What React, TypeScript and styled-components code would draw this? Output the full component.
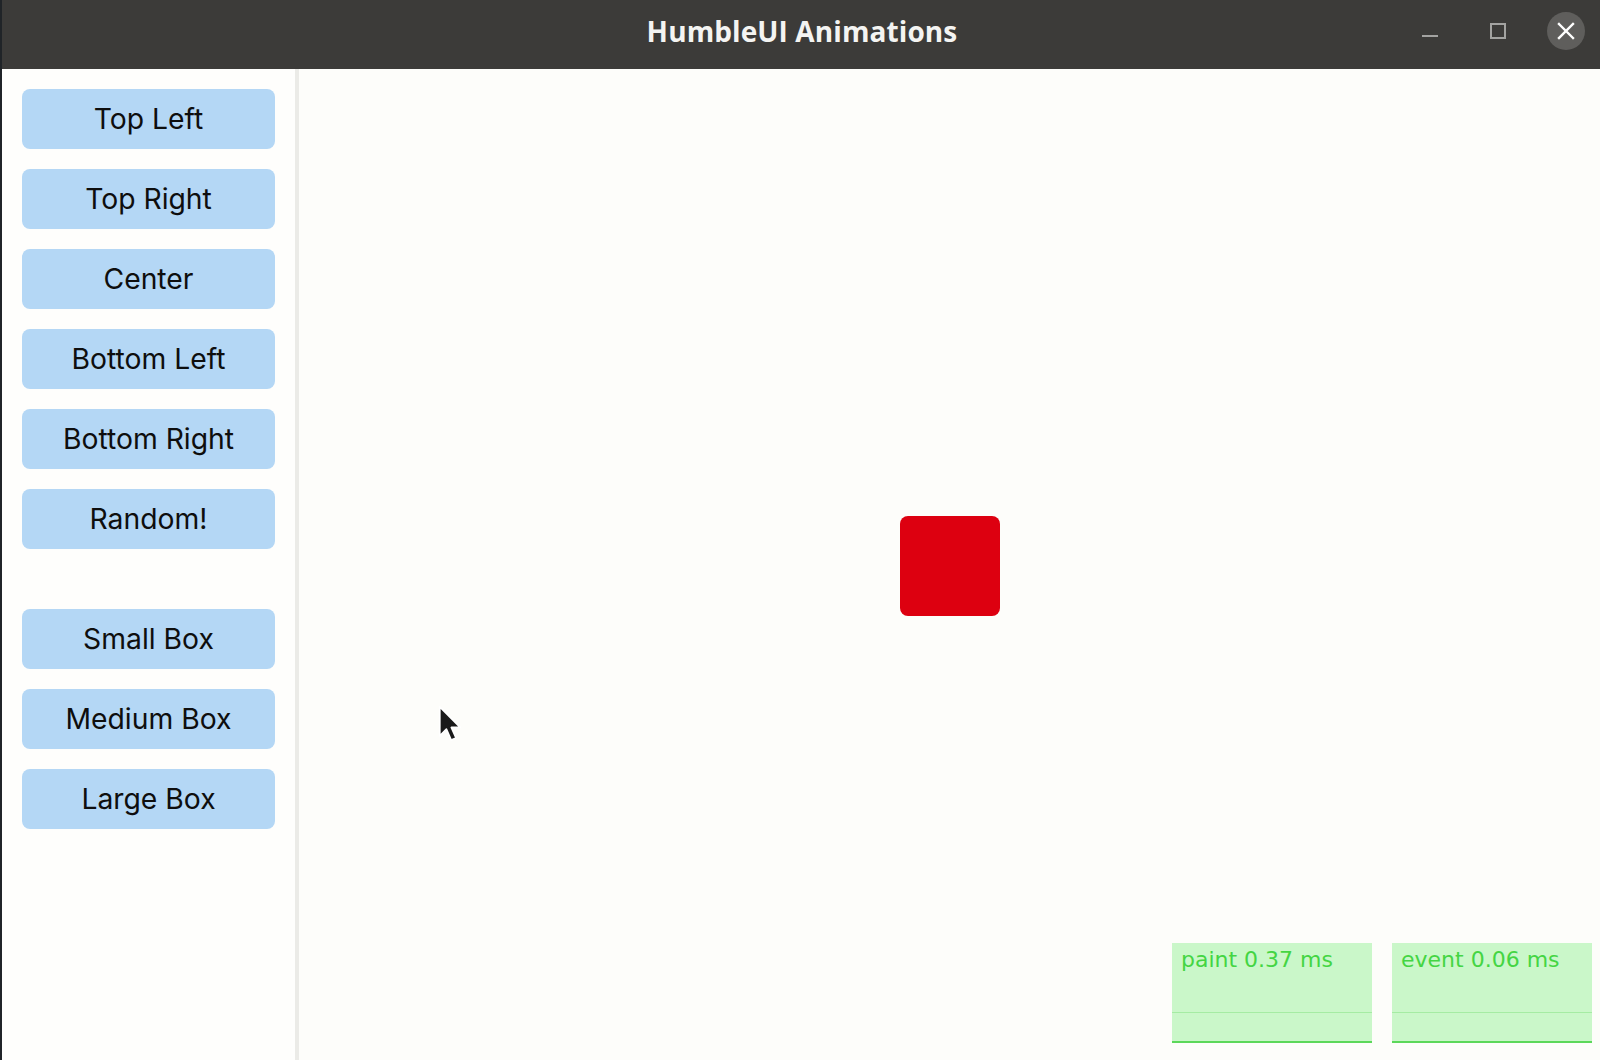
import React from "react";
import styled, { createGlobalStyle } from "styled-components";

const Global = createGlobalStyle`
  html, body { margin: 0; padding: 0; background: #fdfdfa; }
  body { width: 1600px; height: 1060px; overflow: hidden; }
  #root { width: 1600px; height: 1060px; }
`;

const Window = styled.div`
  width: 1600px;
  height: 1060px;
  display: flex;
  flex-direction: column;
  box-sizing: border-box;
  border-left: 2px solid #202428;
  position: relative;
  overflow: hidden;
`;

const TitleBar = styled.div`
  height: 69px;
  flex: none;
  background: #3c3b39;
  display: flex;
  align-items: center;
  justify-content: center;
  position: relative;
`;

const Title = styled.div`
  font-family: "Open Sans", "Noto Sans", sans-serif;
  font-weight: 700;
  font-size: 28px;
  color: #f4f4f2;
  letter-spacing: 0.1px;
  margin-left: 2px;
  margin-top: -7px;
`;

const Controls = styled.div`
  position: absolute;
  right: 15px;
  top: 12px;
  display: flex;
  align-items: center;
  gap: 30px;
`;

const CtrlBtn = styled.div<{ $round?: boolean }>`
  width: 38px;
  height: 38px;
  display: flex;
  align-items: center;
  justify-content: center;
  border-radius: 50%;
  background: ${(p) => (p.$round ? "#5f5e5c" : "transparent")};
`;

const Main = styled.div`
  flex: 1;
  display: flex;
  min-height: 0;
`;

const Sidebar = styled.div`
  width: 293px;
  flex: none;
  background: #fefefc;
  box-sizing: border-box;
  padding: 20px 20px;
  display: flex;
  flex-direction: column;
  gap: 20px;
`;

const Separator = styled.div`
  width: 4px;
  flex: none;
  background: #ebebe7;
`;

const Button = styled.div`
  height: 60px;
  border-radius: 8px;
  background: #b4d7f5;
  display: flex;
  align-items: center;
  justify-content: center;
  font-family: Inter, "Noto Sans", sans-serif;
  font-size: 28.3px;
  color: #0e0e0e;
  box-sizing: border-box;
`;

const Spacer = styled.div`
  height: 20px;
`;

const Canvas = styled.div`
  flex: 1;
  position: relative;
  background: #fdfdfa;
  display: flex;
  align-items: center;
  justify-content: center;
  padding-top: 3px;
`;

const Box = styled.div`
  width: 100px;
  height: 100px;
  border-radius: 8px;
  background: #dd0010;
`;

const Perf = styled.div`
  position: absolute;
  right: 8px;
  bottom: 17px;
  display: flex;
  gap: 20px;
`;

const PerfPanel = styled.div`
  width: 200px;
  height: 100px;
  background: #caf7c9;
  position: relative;
  box-sizing: border-box;
  border-bottom: 2px solid #5cd85a;
`;

const PerfLabel = styled.div`
  font-family: "DejaVu Sans", sans-serif;
  font-size: 22px;
  color: #44d543;
  padding: 3px 0 0 9px;
  line-height: 28px;
`;

const PerfLine = styled.div`
  position: absolute;
  left: 0;
  right: 0;
  top: 69px;
  height: 1px;
  background: #a5eca3;
`;

const Cursor = styled.svg`
  position: absolute;
  left: 433px;
  top: 703px;
`;

const labels1 = ["Top Left", "Top Right", "Center", "Bottom Left", "Bottom Right", "Random!"];
const labels2 = ["Small Box", "Medium Box", "Large Box"];

export default function App() {
  return (
    <>
      <Global />
      <Window>
        <TitleBar>
          <Title>HumbleUI Animations</Title>
          <Controls>
            <CtrlBtn>
              <svg width="18" height="18" viewBox="0 0 18 18">
                <rect x="1" y="13" width="16" height="2" fill="#a3a3a1" />
              </svg>
            </CtrlBtn>
            <CtrlBtn>
              <svg width="18" height="18" viewBox="0 0 18 18">
                <rect x="2" y="2" width="14" height="14" fill="none" stroke="#a3a3a1" strokeWidth="2" />
              </svg>
            </CtrlBtn>
            <CtrlBtn $round>
              <svg width="18" height="18" viewBox="0 0 18 18">
                <path d="M2 2 L16 16 M16 2 L2 16" stroke="#ffffff" strokeWidth="2.4" strokeLinecap="square" />
              </svg>
            </CtrlBtn>
          </Controls>
        </TitleBar>
        <Main>
          <Sidebar>
            {labels1.map((l) => (
              <Button key={l}>{l}</Button>
            ))}
            <Spacer />
            {labels2.map((l) => (
              <Button key={l}>{l}</Button>
            ))}
          </Sidebar>
          <Separator />
          <Canvas>
            <Box />
            <Perf>
              <PerfPanel>
                <PerfLabel>paint 0.37 ms</PerfLabel>
                <PerfLine />
              </PerfPanel>
              <PerfPanel>
                <PerfLabel>event 0.06 ms</PerfLabel>
                <PerfLine />
              </PerfPanel>
            </Perf>
          </Canvas>
        </Main>
        <Cursor width="36" height="44" viewBox="0 0 30 36">
          <path
            d="M4 3 L4 27 L9.5 21.5 L13.5 30.5 L17.5 28.8 L13.6 20 L21 20 Z"
            fill="#1a1a1a"
            stroke="#ffffff"
            strokeWidth="1.4"
            strokeLinejoin="round"
          />
        </Cursor>
      </Window>
    </>
  );
}
